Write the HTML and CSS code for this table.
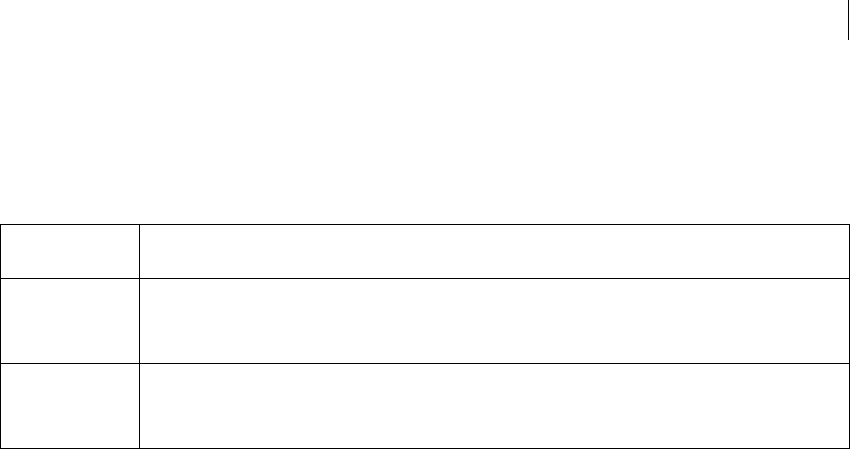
FILE: index.html
```html
<!DOCTYPE html>
<html>
<head>
<meta charset="utf-8">
<link rel="stylesheet" href="styles.css">
</head>
<body>
<div class="top">
  <div class="caret"></div>
</div>
<table class="grid">
  <colgroup>
    <col class="c1">
    <col class="c2">
  </colgroup>
  <tr class="r1"><td></td><td></td></tr>
  <tr class="r2"><td></td><td></td></tr>
  <tr class="r3"><td></td><td></td></tr>
</table>
</body>
</html>
```
FILE: styles.css
```css
html, body {
  margin: 0;
  padding: 0;
  background: #fff;
  font-family: "Liberation Sans", Arial, sans-serif;
}
.top {
  height: 224px;
  display: flex;
  justify-content: flex-end;
  padding-right: 1px;
}
.caret {
  width: 1px;
  height: 40px;
  background: #000;
}
.grid {
  width: 850px;
  border-collapse: collapse;
  table-layout: fixed;
}
.grid td {
  border: 1px solid #000;
  padding: 0;
}
.c1 { width: 139px; }
.r1 td { height: 53px; }
.r2 td { height: 84px; }
.r3 td { height: 84px; }
```
